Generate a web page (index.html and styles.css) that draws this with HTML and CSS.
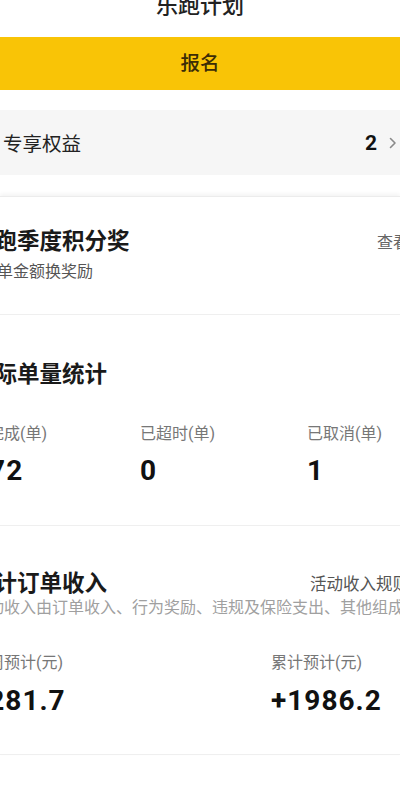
FILE: index.html
```html
<!DOCTYPE html>
<html lang="zh-CN">
<head>
<meta charset="utf-8">
<title>乐跑计划</title>
<link rel="stylesheet" href="styles.css">
</head>
<body>
<div class="screen">
  <header class="title">乐跑计划</header>
  <div class="signup">报名</div>
  <div class="benefit">
    <span class="benefit-name">专享权益</span>
    <span class="benefit-right">
      <span class="benefit-count">2</span>
      <svg class="chevron" width="8" height="12" viewBox="0 0 8 12"><path d="M1.5 1.5 L6 6 L1.5 10.5" fill="none" stroke="#8a8a8a" stroke-width="1.6" stroke-linecap="round" stroke-linejoin="round"/></svg>
    </span>
  </div>

  <div class="card">
    <section class="block block-first">
      <div class="inner">
        <div class="head">
          <h2 class="h">乐跑季度积分奖</h2>
          <span class="link">查看</span>
        </div>
        <p class="sub">按单金额换奖励</p>
      </div>
    </section>

    <section class="block block-stats">
      <div class="inner">
        <div class="head">
          <h2 class="h">实际单量统计</h2>
        </div>
        <div class="stats three">
          <div class="stat"><div class="label">已完成(单)</div><div class="num">172</div></div>
          <div class="stat"><div class="label">已超时(单)</div><div class="num">0</div></div>
          <div class="stat"><div class="label">已取消(单)</div><div class="num">1</div></div>
        </div>
      </div>
    </section>

    <section class="block block-income">
      <div class="inner">
        <div class="head">
          <h2 class="h">累计订单收入</h2>
          <span class="link">活动收入规则</span>
        </div>
        <p class="desc">活动收入由订单收入、行为奖励、违规及保险支出、其他组成</p>
        <div class="stats two">
          <div class="stat"><div class="label">本周预计(元)</div><div class="num big">+281.7</div></div>
          <div class="stat"><div class="label">累计预计(元)</div><div class="num big">+1986.2</div></div>
        </div>
      </div>
    </section>
  </div>
</div>
</body>
</html>
```

FILE: styles.css
```css
* { box-sizing: border-box; }
html, body {
  margin: 0;
  padding: 0;
  background: #ffffff;
}
body {
  font-family: Roboto, "Noto Sans CJK SC", "Noto Sans", sans-serif;
  color: #1c1c1c;
}
.screen {
  width: 400px;
  height: 789px;
  overflow: hidden;
  background: #ffffff;
}
.title {
  height: 30px;
  line-height: 30px;
  margin-top: -9px;
  text-align: center;
  font-size: 22px;
  font-weight: 500;
  color: #222;
}
.signup {
  margin-top: 16px;
  height: 53px;
  line-height: 53px;
  background: #f9c406;
  text-align: center;
  font-size: 19.5px;
  font-weight: 500;
  color: #3b2c06;
}
.benefit {
  margin-top: 20px;
  height: 65px;
  background: #f6f6f6;
  display: flex;
  align-items: center;
  justify-content: space-between;
  padding: 0 3px 0 3px;
}
.benefit-name {
  font-size: 19.5px;
  color: #222;
}
.benefit-right {
  display: flex;
  align-items: center;
  gap: 12px;
}
.benefit-count {
  font-size: 21px;
  font-weight: 700;
  color: #111;
}
.chevron { display: block; }

.card {
  margin-top: 21px;
  border-top: 1px solid #ececec;
  box-shadow: 0 -2px 4px rgba(0, 0, 0, 0.05);
}
.block {
  border-bottom: 1px solid #efefef;
}
.inner {
  margin-left: -28px;
  margin-right: -9px;
  display: flex;
  flex-direction: column;
}
.block-first .inner { padding: 29px 0 31px; }
.block-stats .inner { padding: 44px 0 37px; }
.block-income .inner { padding: 42px 0 36px; }

.head {
  display: flex;
  justify-content: space-between;
  align-items: center;
  height: 30px;
}
.h {
  margin: 0;
  font-size: 22.5px;
  font-weight: 700;
  color: #1a1a1a;
  line-height: 30px;
}
.link {
  font-size: 16px;
  color: #666;
}
.block-income .link { font-size: 16.5px; color: #555; }
.sub {
  margin: 5px 0 0;
  padding-left: 9px;
  font-size: 16px;
  line-height: 22px;
  color: #555;
}
.desc {
  margin: 0;
  font-size: 16px;
  line-height: 20px;
  color: #a0a0a0;
  white-space: nowrap;
}
.stats {
  display: grid;
  margin-top: 34px;
}
.stats.three { grid-template-columns: 168px 167px 1fr; }
.stats.two { grid-template-columns: 299px 1fr; }
.label {
  font-size: 16px;
  line-height: 22px;
  color: #777;
}
.num {
  margin-top: 9px;
  font-size: 28px;
  line-height: 34px;
  font-weight: 700;
  letter-spacing: 1px;
  color: #111;
}
.num.big { margin-top: 10px; }
```
